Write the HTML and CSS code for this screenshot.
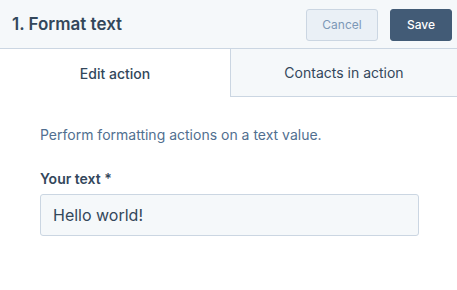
FILE: index.html
```html
<!DOCTYPE html>
<html lang="en">
<head>
  <meta charset="UTF-8">
  <title>Format text</title>
  <link rel="stylesheet" href="styles.css">
</head>
<body>

<div class="panel">
  <div class="panel-header">
    <h1 class="panel-title">1. Format text</h1>
    <div class="header-actions">
      <button class="btn btn-secondary" type="button">Cancel</button>
      <button class="btn btn-primary" type="button">Save</button>
    </div>
  </div>

  <div class="tabs">
    <div class="tab tab-active">Edit action</div>
    <div class="tab">Contacts in action</div>
  </div>

  <div class="panel-body">
    <p class="description">Perform formatting actions on a text value.</p>
    <label class="field-label" for="yourText">Your text *</label>
    <input class="text-input" id="yourText" type="text" value="Hello world!">
  </div>
</div>

</body>
</html>
```

FILE: styles.css
```css
body { margin: 0; font-family: Inter, "Noto Sans", sans-serif; background: #fff; color: #33475b; }
.panel { width: 457px; }

.panel-header {
  height: 48px; background: #f5f8fa; border-bottom: 1px solid #cbd6e2;
  display: flex; align-items: center; justify-content: space-between;
  padding: 0 5px 0 12px;
}
.panel-title { margin: 0; font-size: 17px; font-weight: 600; color: #33475b; }
.header-actions { display: flex; gap: 12px; align-items: center; margin-top: 1px; }
.btn {
  font-family: inherit; font-size: 12px; height: 32px; border-radius: 3px;
  cursor: pointer; padding: 0;
}
.btn-secondary {
  width: 72px; background: #eaf0f6; color: #7c98b6; border: 1px solid #cbd6e2;
}
.btn-primary {
  width: 62px; background: #425b76; color: #fff; border: 1px solid #425b76; font-weight: 500;
}

.tabs { display: flex; height: 48px; }
.tab {
  flex: 1; display: flex; align-items: center; justify-content: center;
  font-size: 14px; color: #33475b; background: #f5f8fa;
  border-left: 1px solid #cbd6e2; border-bottom: 1px solid #cbd6e2;
}
.tab-active {
  flex: 0 0 230px; background: #fff; border: none; font-weight: 500;
}

.panel-body { padding: 27px 38px 0 40px; }
.description { margin: 0; font-size: 14px; color: #516f90; line-height: 22px; }
.field-label {
  display: block; margin-top: 23px; font-size: 14px; font-weight: 600; color: #33475b; line-height: 20px;
}
.text-input {
  display: block; width: 379px; height: 42px; margin-top: 5px; box-sizing: border-box;
  padding: 0 12px; font-family: inherit; font-size: 16px; color: #33475b;
  background: #f5f8fa; border: 1px solid #cbd6e2; border-radius: 3px;
}
```
